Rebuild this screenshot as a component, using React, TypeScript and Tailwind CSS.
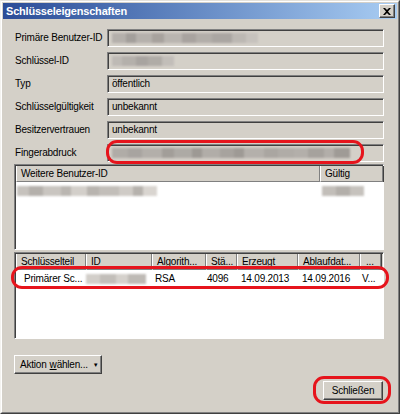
import React from 'react';

const sunken =
  'border border-t-[#808080] border-l-[#808080] border-b-white border-r-white shadow-[inset_1px_1px_0_#404040]';
const raised =
  'border border-t-white border-l-white border-b-[#404040] border-r-[#404040] shadow-[inset_-1px_-1px_0_#808080]';

// blurred-out text, drawn as soft grey patches
function Blur({ parts }: { parts: [number, string][] }) {
  return (
    <span className="flex h-[10px] blur-[0.8px]">
      {parts.map(([w, c], i) => (
        <span key={i} className="h-full" style={{ width: w, background: c }} />
      ))}
    </span>
  );
}

function Field({ children }: { children?: React.ReactNode }) {
  return (
    <div className={`h-[18px] flex items-center pl-[4px] bg-[#d4d0c8] ${sunken}`}>{children}</div>
  );
}

const rows: [string, React.ReactNode][] = [
  [
    'Primäre Benutzer-ID',
    <Blur
      parts={[
        [14, '#b4b0ab'],
        [10, '#a39f9b'],
        [16, '#b5b1ac'],
        [12, '#a7a29d'],
        [18, '#b9b5b0'],
        [14, '#a8a39f'],
        [16, '#b2aea9'],
        [20, '#aaa6a2'],
        [14, '#bcb8b3'],
        [12, '#c6c2bd'],
      ]}
    />,
  ],
  [
    'Schlüssel-ID',
    <Blur
      parts={[
        [10, '#bebab5'],
        [14, '#b4b0ab'],
        [12, '#a8a4a0'],
        [14, '#b0aca7'],
        [12, '#c2beb9'],
      ]}
    />,
  ],
  ['Typ', 'öffentlich'],
  ['Schlüsselgültigkeit', 'unbekannt'],
  ['Besitzervertrauen', 'unbekannt'],
  [
    'Fingerabdruck',
    <Blur
      parts={[
        [16, '#b0aca7'],
        [14, '#a8a4a0'],
        [20, '#b3afaa'],
        [12, '#a29e99'],
        [18, '#adaaa5'],
        [10, '#9d9994'],
        [18, '#b1ada8'],
        [14, '#a7a39e'],
        [10, '#9e9a95'],
        [20, '#b4b0ab'],
        [14, '#aaa6a1'],
        [16, '#b0aca7'],
        [14, '#b3afaa'],
        [16, '#a6a29d'],
        [10, '#b2aea9'],
        [16, '#9f9b96'],
      ]}
    />,
  ],
];

function Head({ w, label, pl = 'pl-[4px]' }: { w?: string; label: string; pl?: string }) {
  return (
    <div
      className={`${w ?? 'flex-1'} h-full flex items-center ${pl} border-r border-r-[#808080] border-l border-l-white border-b border-b-[#808080] shadow-[1px_0_0_#404040] whitespace-nowrap overflow-hidden`}
    >
      {label}
    </div>
  );
}

export default function App() {
  return (
    <div
      className="w-[400px] h-[414px] bg-[#d4d0c8] text-black text-[10px] tracking-[-0.2px] leading-none"
      style={{ fontFamily: '"Liberation Sans", Arial, sans-serif' }}
    >
      <div className="relative h-full border border-t-[#e4e2dd] border-l-[#f4f3f0] border-b-[#404040] border-r-[#404040]">
        <div className="h-full border border-t-white border-l-white border-b-[#808080] border-r-[#808080] p-[1px] flex flex-col">
          {/* Title bar */}
          <div className="h-[16px] flex items-center justify-between pl-[3px] pr-[2px] bg-gradient-to-r from-[#2b4c97] to-[#a9cdf3]">
            <span className="text-white font-bold text-[11px] tracking-[-0.2px]">Schlüsseleigenschaften</span>
            <button className={`w-[16px] h-[14px] bg-[#d4d0c8] flex items-center justify-center ${raised}`}>
              <svg width="8" height="7" viewBox="0 0 8 7">
                <path d="M0 0h2l2 2 2-2h2L5 3.5 8 7H6L4 5 2 7H0l3-3.5z" fill="#000" />
              </svg>
            </button>
          </div>

          {/* Content */}
          <div className="flex-1 flex flex-col pl-[11px] pr-[13px] pt-[10px]">
            <div className="grid grid-cols-[93px_1fr] gap-y-[5px] items-center">
              {rows.map(([label, value]) => (
                <React.Fragment key={label}>
                  <div className="pl-[1px]">{label}</div>
                  <Field>{value}</Field>
                </React.Fragment>
              ))}
            </div>

            {/* user id list */}
            <div className={`mt-[2px] h-[86px] bg-white flex flex-col ${sunken} pl-[1px] pt-[1px]`}>
              <div className="h-[16px] flex bg-[#d4d0c8]">
                <Head w="w-[304px]" label="Weitere Benutzer-ID" />
                <Head label="Gültig" />
              </div>
              <div className="h-[17px] flex items-center">
                <div className="w-[304px] pl-[1px]">
                  <Blur
                    parts={[
                      [12, '#c6c2bd'],
                      [14, '#b4b0ab'],
                      [18, '#c9c5c0'],
                      [10, '#bab6b1'],
                      [16, '#d3cfca'],
                      [12, '#b8b4af'],
                      [20, '#c2beb9'],
                      [14, '#cfcbc6'],
                      [10, '#b6b2ad'],
                      [14, '#d9d5d0'],
                    ]}
                  />
                </div>
                <div className="pl-[2px]">
                  <Blur
                    parts={[
                      [14, '#c2beb9'],
                      [14, '#b3afaa'],
                      [14, '#c6c2bd'],
                    ]}
                  />
                </div>
              </div>
            </div>

            {/* key parts list */}
            <div className={`mt-[2px] h-[87px] bg-white flex flex-col ${sunken} pl-[1px] pt-[1px]`}>
              <div className="h-[16px] flex bg-[#d4d0c8]">
                <Head w="w-[70px]" label="Schlüsselteil" />
                <Head w="w-[66px]" label="ID" />
                <Head w="w-[54px]" label="Algorith..." />
                <Head w="w-[31px]" label="Stä..." />
                <Head w="w-[61px]" label="Erzeugt" />
                <Head w="w-[62px]" label="Ablaufdat..." />
                <Head w="w-[21px]" label="..." pl="pl-[5px]" />
                <div className="flex-1" />
              </div>
              <div className="h-[17px] flex items-center whitespace-nowrap">
                <div className="w-[70px] pl-[8px]">Primärer Sc...</div>
                <div className="w-[66px]">
                  <Blur
                    parts={[
                      [14, '#d2cec9'],
                      [16, '#c2beb9'],
                      [12, '#d5d1cc'],
                      [18, '#bebab5'],
                    ]}
                  />
                </div>
                <div className="w-[54px] pl-[3px]">RSA</div>
                <div className="w-[31px] pl-[1px]">4096</div>
                <div className="w-[61px] pl-[4px]">14.09.2013</div>
                <div className="w-[62px] pl-[4px]">14.09.2016</div>
                <div className="w-[21px] pl-[2px]">V...</div>
              </div>
            </div>

            {/* buttons */}
            <button
              className={`mt-[16px] w-[88px] h-[19px] bg-[#d4d0c8] flex items-center pl-[5px] whitespace-nowrap ${raised}`}
            >
              Aktion <span className="underline ml-[3px]">w</span>ählen...
              <span className="ml-[5px] text-[6px]">▼</span>
            </button>
            <div className="flex justify-end mt-[7px] pr-[1px]">
              <button className={`w-[60px] h-[19px] bg-[#d4d0c8] flex items-center justify-center ${raised}`}>
                Schließen
              </button>
            </div>
          </div>
        </div>

        {/* red markings */}
        <div className="absolute left-[105px] top-[139px] w-[258px] h-[24px] border-[3px] border-[#e6141c] rounded-[11px]" />
        <div className="absolute left-[10px] top-[265px] w-[378px] h-[23px] border-[3px] border-[#e6141c] rounded-[11px]" />
        <div className="absolute left-[312px] top-[375px] w-[78px] h-[28px] border-[3px] border-[#e6141c] rounded-[11px]" />
      </div>
    </div>
  );
}
